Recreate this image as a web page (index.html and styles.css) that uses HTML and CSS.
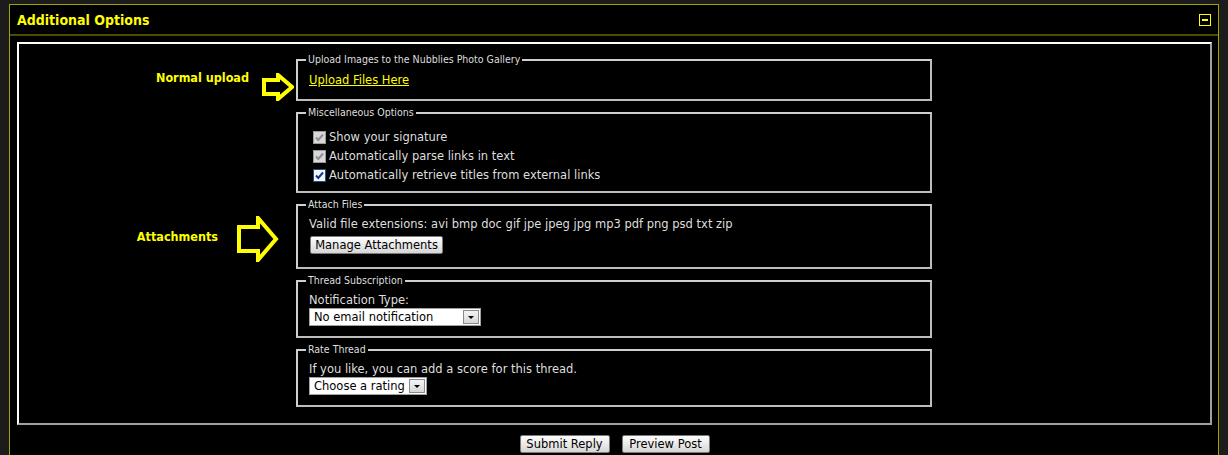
FILE: index.html
```html
<!DOCTYPE html>
<html lang="en">
<head>
  <meta charset="UTF-8">
  <title>Additional Options</title>
  <link rel="stylesheet" href="styles.css">
</head>
<body>
<div class="panel">
  <div class="panel-head">
    <span class="panel-title">Additional Options</span>
    <span class="collapse"></span>
  </div>
  <div class="panel-body">
    <div class="options">

      <div class="row">
        <div class="note note-upload">
          <span class="note-label">Normal upload</span>
          <svg class="arrow" width="32" height="28" viewBox="0 0 32 28"><polygon points="2,7 16,7 16,2 30,14 16,26 16,21 2,21" /></svg>
        </div>
        <fieldset class="fs-upload">
          <legend>Upload Images to the Nubblies Photo Gallery</legend>
          <a class="upload-link" href="#">Upload Files Here</a>
        </fieldset>
      </div>

      <div class="row">
        <div class="note"></div>
        <fieldset class="fs-checks">
          <legend>Miscellaneous Options</legend>
          <div class="check-row"><span class="cb cb-off"><svg viewBox="0 0 11 11"><path d="M2 5.5 L4.3 8 L9 2.5" /></svg></span>Show your signature</div>
          <div class="check-row"><span class="cb cb-off"><svg viewBox="0 0 11 11"><path d="M2 5.5 L4.3 8 L9 2.5" /></svg></span>Automatically parse links in text</div>
          <div class="check-row"><span class="cb cb-on"><svg viewBox="0 0 11 11"><path d="M2 5.5 L4.3 8 L9 2.5" /></svg></span>Automatically retrieve titles from external links</div>
        </fieldset>
      </div>

      <div class="row">
        <div class="note note-attach">
          <span class="note-label">Attachments</span>
          <svg class="arrow" width="42" height="46" viewBox="0 0 42 46"><polygon points="2,11 21,11 21,2 39,23 21,44 21,35 2,35" /></svg>
        </div>
        <fieldset class="fs-attach">
          <legend>Attach Files</legend>
          <div class="line">Valid file extensions: avi bmp doc gif jpe jpeg jpg mp3 pdf png psd txt zip</div>
          <div class="btn-line"><button class="btn btn-manage">Manage Attachments</button></div>
        </fieldset>
      </div>

      <div class="row">
        <div class="note"></div>
        <fieldset class="fs-select">
          <legend>Thread Subscription</legend>
          <div class="line">Notification Type:</div>
          <span class="select select-notify"><span class="select-text">No email notification</span><span class="select-btn"></span></span>
        </fieldset>
      </div>

      <div class="row">
        <div class="note"></div>
        <fieldset class="fs-select">
          <legend>Rate Thread</legend>
          <div class="line">If you like, you can add a score for this thread.</div>
          <span class="select select-rate"><span class="select-text">Choose a rating</span><span class="select-btn"></span></span>
        </fieldset>
      </div>

    </div>
    <div class="submit-group">
      <button class="btn btn-submit">Submit Reply</button>
      <button class="btn btn-preview">Preview Post</button>
    </div>
  </div>
</div>
</body>
</html>
```

FILE: styles.css
```css
body {
  margin: 0;
  padding: 4px 0 0 9px;
  background: #1c1c1c;
  font-family: "DejaVu Sans", sans-serif;
  color: #dedede;
  height: 455px;
  box-sizing: border-box;
  overflow: hidden;
}
.panel {
  width: 1210px;
  box-sizing: border-box;
  border: 1px solid #a3a300;
  border-bottom: none;
  background: #000;
  height: 460px;
}
.panel-head {
  height: 29px;
  border-bottom: 2px solid #4d4d00;
  padding: 0 7px 0 7px;
  display: flex;
  justify-content: space-between;
  align-items: center;
}
.panel-title {
  color: #ffff00;
  font-family: "DejaVu Sans Condensed", "DejaVu Sans", sans-serif;
  font-weight: bold;
  font-size: 14px;
}
.collapse {
  width: 10px;
  height: 10px;
  border: 1px solid #ffff00;
  position: relative;
  margin-top: 1px;
}
.collapse::after {
  content: "";
  position: absolute;
  left: 2px;
  right: 2px;
  top: 4px;
  height: 2px;
  background: #ffff00;
}
.panel-body {
  padding: 6px 6px 0 7px;
}
.options {
  border: 2px solid;
  border-color: #ffffff #a0a0a0 #a0a0a0 #ffffff;
  padding: 9px 0 16px 0;
}
.row {
  display: flex;
  align-items: flex-start;
  margin-bottom: 5px;
}
.row:last-child {
  margin-bottom: 0;
}
.note {
  width: 277px;
  box-sizing: border-box;
  flex-shrink: 0;
  display: flex;
  justify-content: flex-end;
  align-items: flex-start;
}
.note-label {
  color: #ffff00;
  font-family: "DejaVu Sans Condensed", "DejaVu Sans", sans-serif;
  font-weight: bold;
  font-size: 12.5px;
  line-height: 15px;
}
.arrow polygon {
  fill: none;
  stroke: #ffff00;
  stroke-width: 4;
  stroke-linejoin: miter;
}
.note-upload {
  padding-right: 2px;
}
.note-upload .note-label {
  margin: 17px 13px 0 0;
}
.note-upload .arrow {
  margin: 20px 0 -2px 0;
}
.note-attach {
  padding-right: 17px;
}
.note-attach .note-label {
  margin: 31px 19px 0 0;
}
.note-attach .arrow {
  margin-top: 18px;
}
fieldset {
  width: 636px;
  box-sizing: border-box;
  margin: 0;
  padding: 6px 10px 12px 11px;
  border: 2px solid;
  border-color: #cfcfcf #bdbdbd #bdbdbd #cfcfcf;
  font-size: 11.5px;
  line-height: 15px;
}
legend {
  font-family: "DejaVu Sans Condensed", "DejaVu Sans", sans-serif;
  font-size: 10.5px;
  line-height: 13px;
  padding: 0 2px;
  margin-left: -3px;
  color: #dedede;
}
.fs-upload {
  padding-top: 7px;
  padding-bottom: 11px;
}
.upload-link {
  display: inline-block;
  color: #ffff00;
}
.fs-checks {
  padding-top: 9px;
  padding-bottom: 6px;
}
.fs-attach {
  padding-bottom: 13px;
}
.fs-select {
  padding-bottom: 10px;
}
.check-row {
  height: 19px;
  display: flex;
  align-items: center;
  padding-left: 4px;
}
.cb {
  width: 11px;
  height: 11px;
  border: 1px solid;
  margin-right: 3px;
  display: inline-flex;
}
.cb svg {
  width: 11px;
  height: 11px;
}
.cb path {
  fill: none;
  stroke-width: 2;
}
.cb-off {
  border-color: #9a9a9a;
  background: #d8d8d8;
}
.cb-off path {
  stroke: #8d8d9d;
}
.cb-on {
  border-color: #1c5180;
  background: #f4f4f4;
}
.cb-on path {
  stroke: #1a2f8a;
}
.btn-line {
  margin-top: 4px;
  padding-left: 1px;
}
.btn {
  height: 18px;
  padding: 0;
  font-family: "DejaVu Sans", sans-serif;
  font-size: 11.5px;
  color: #000;
  background: linear-gradient(#fdfdfd, #e6e6e6 60%, #d6d6d6);
  border: 1px solid #7a7a7a;
  border-radius: 2px;
  display: inline-flex;
  align-items: center;
  justify-content: center;
}
.btn-manage { width: 133px; }
.btn-submit { width: 90px; }
.btn-preview { width: 88px; }
.select {
  display: flex;
  height: 18px;
  box-sizing: border-box;
  background: #fff;
  border: 1px solid #a0a0a0;
  color: #000;
  align-items: center;
  padding: 1px;
}
.select-notify { width: 172px; }
.select-rate { width: 118px; }
.select-text {
  flex: 1;
  padding-left: 3px;
  font-size: 11.5px;
  white-space: nowrap;
}
.select-btn {
  width: 16px;
  height: 14px;
  box-sizing: border-box;
  border: 1px solid #8a8a8a;
  background: linear-gradient(#f4f4f4, #d8d8d8);
  position: relative;
}
.select-btn::after {
  content: "";
  position: absolute;
  left: 4px;
  top: 5px;
  border-left: 3px solid transparent;
  border-right: 3px solid transparent;
  border-top: 3px solid #000;
}
.submit-group {
  display: flex;
  justify-content: center;
  gap: 12px;
  padding-top: 10px;
}
```
